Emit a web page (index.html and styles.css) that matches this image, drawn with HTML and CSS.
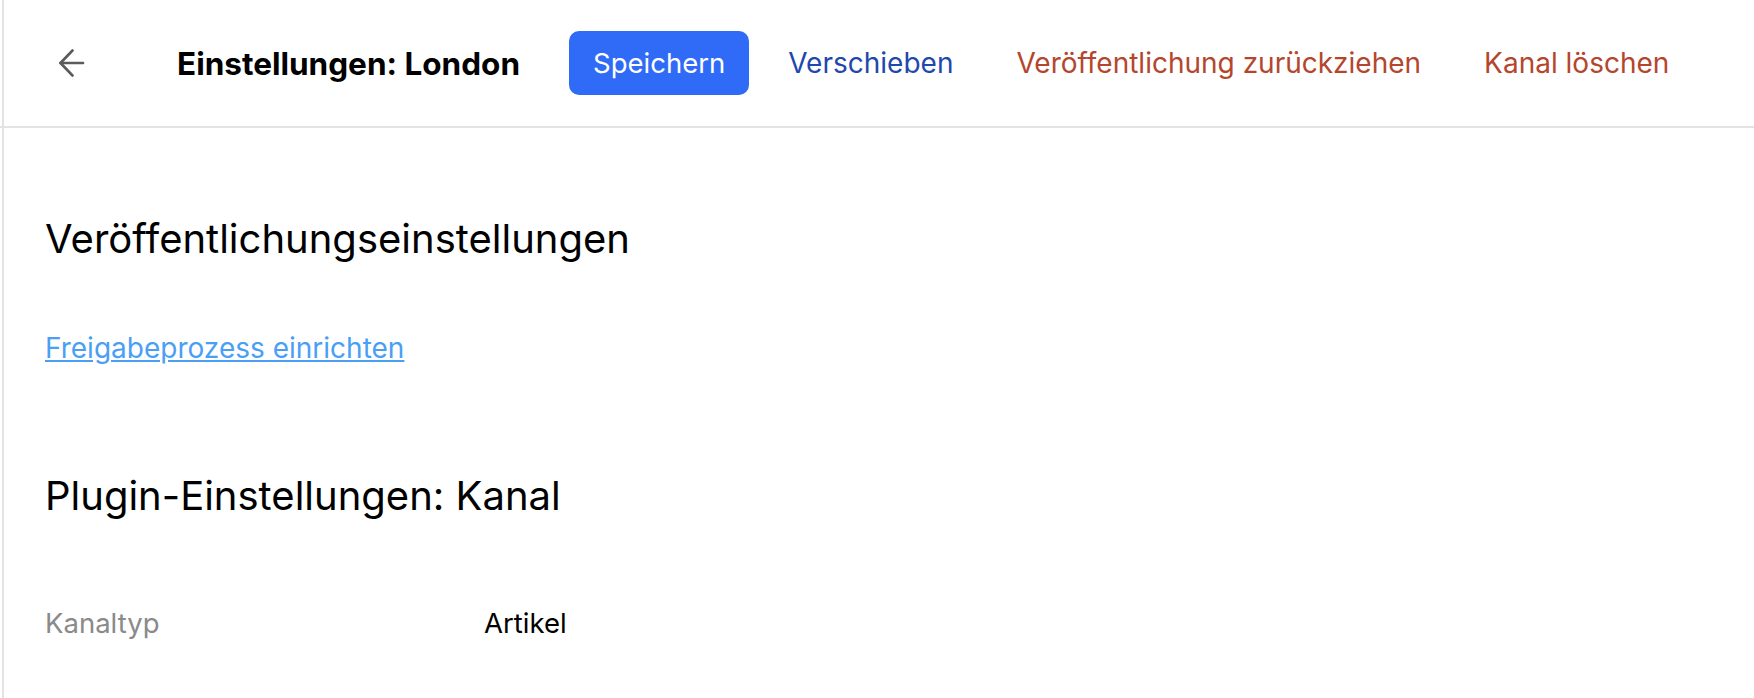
FILE: index.html
```html
<!DOCTYPE html>
<html lang="de">
<head>
    <meta charset="UTF-8">
    <meta name="viewport" content="width=device-width, initial-scale=1.0">
    <title>Einstellungen: London</title>
    <link rel="stylesheet" href="styles.css">
</head>
<body>
<div class="page">
    <header class="topbar">
        <button class="back-button" aria-label="Zurück">
            <svg width="28" height="28" viewBox="0 0 28 28" fill="none" stroke="currentColor" stroke-width="2.6" stroke-linecap="round" stroke-linejoin="round">
                <line x1="25" y1="14" x2="2.5" y2="14"/>
                <polyline points="14.5,1.5 2.5,14 14.5,26.5"/>
            </svg>
        </button>
        <h1 class="page-title">Einstellungen: London</h1>
        <div class="actions">
            <button class="btn btn-primary">Speichern</button>
            <button class="btn btn-link">Verschieben</button>
            <button class="btn btn-danger">Veröffentlichung zurückziehen</button>
            <button class="btn btn-danger">Kanal löschen</button>
        </div>
    </header>

    <main class="content">
        <section class="settings-section">
            <h2 class="section-title">Veröffentlichungseinstellungen</h2>
            <a href="#" class="text-link">Freigabeprozess einrichten</a>
        </section>

        <section class="settings-section">
            <h2 class="section-title">Plugin-Einstellungen: Kanal</h2>
            <div class="field-row">
                <span class="field-label">Kanaltyp</span>
                <span class="field-value">Artikel</span>
            </div>
        </section>
    </main>
</div>
</body>
</html>
```

FILE: styles.css
```css
body {
    margin: 0;
    font-family: Inter, "Noto Sans", sans-serif;
    background-color: #ffffff;
    color: #000000;
}
.page {
    margin-left: 2px;
    border-left: 2px solid #e3e3e3;
    min-height: 698px;
}
.topbar {
    display: flex;
    align-items: center;
    height: 126px;
    border-bottom: 2px solid #e3e3e3;
    margin-left: -4px;
    padding-left: 4px;
}
.back-button {
    display: flex;
    align-items: center;
    justify-content: center;
    margin-left: 54px;
    padding: 0;
    border: none;
    background: none;
    color: #5b5b5e;
    cursor: pointer;
}
.page-title {
    margin: 0 0 0 91px;
    font-size: 31.5px;
    font-weight: 700;
}
.actions {
    display: flex;
    align-items: center;
    gap: 15px;
    margin-left: 49px;
}
.btn {
    height: 64px;
    padding: 0 24px;
    font-family: inherit;
    font-size: 28px;
    border: none;
    border-radius: 10px;
    background: none;
    cursor: pointer;
}
.btn-primary {
    font-size: 27.5px;
    background-color: #2f6bf6;
    color: #ffffff;
}
.btn-link {
    color: #1f48ad;
}
.btn-danger {
    color: #b4462e;
}
.content {
    padding: 87px 41px 0;
}
.settings-section {
    margin-bottom: 86px;
}
.section-title {
    margin: 0 0 68px;
    font-size: 40px;
    line-height: 48px;
    font-weight: 400;
}
.settings-section:first-child {
    margin-bottom: 107px;
}
.settings-section:last-child .section-title {
    margin-bottom: 86px;
}
.text-link {
    display: inline-block;
    font-size: 28px;
    line-height: 34px;
    color: #4a9ff5;
}
.field-row {
    display: flex;
    align-items: center;
    font-size: 27.5px;
    line-height: 34px;
}
.field-label {
    width: 439px;
    color: #8a8a8a;
}
.field-value {
    color: #000000;
}
```
